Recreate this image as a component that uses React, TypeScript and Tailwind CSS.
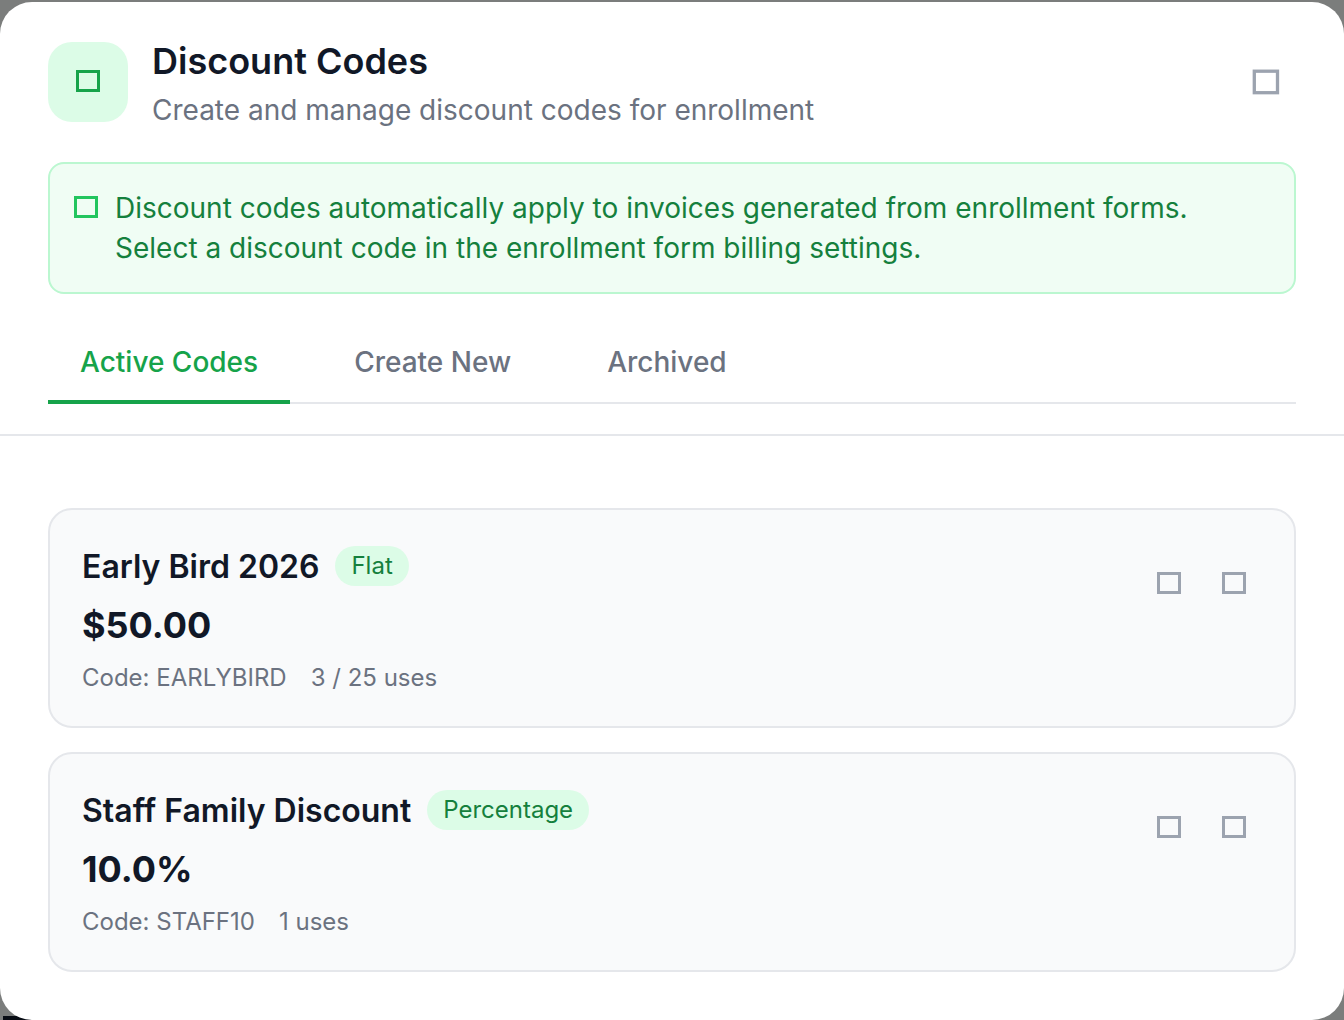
type BoxProps = { className?: string; large?: boolean };

function Box({ className, large }: BoxProps) {
  return large ? (
    <svg width="28" height="26" viewBox="0 0 28 26" fill="none" stroke="currentColor" strokeWidth="3.3" className={className} aria-hidden="true">
      <rect x="2.3" y="2.2" width="23.2" height="21.5" />
    </svg>
  ) : (
    <svg width="24" height="22" viewBox="0 0 24 22" fill="none" stroke="currentColor" strokeWidth="3" className={className} aria-hidden="true">
      <rect x="1.5" y="1.5" width="21" height="19" />
    </svg>
  );
}

type Code = { name: string; kind: string; value: string; code: string; uses: string };

const codes: Code[] = [
  { name: "Early Bird 2026", kind: "Flat", value: "$50.00", code: "EARLYBIRD", uses: "3 / 25 uses" },
  { name: "Staff Family Discount", kind: "Percentage", value: "10.0%", code: "STAFF10", uses: "1 uses" },
];

function CodeCard({ item }: { item: Code }) {
  return (
    <li className="flex items-start justify-between rounded-3xl border-2 border-[#e5e7eb] bg-[#f9fafb] p-8">
      <div>
        <div className="flex items-start gap-4">
          <h3 className="text-[32px] leading-[50px] font-semibold text-[#111827]">{item.name}</h3>
          <span className="mt-1 rounded-full bg-[#dcfce7] px-4 py-1 text-[24px] leading-8 text-[#15803d]">{item.kind}</span>
        </div>
        <p className="mt-1.5 text-[36px] leading-[54px] font-bold text-[#111827]">{item.value}</p>
        <div className="mt-2.5 flex gap-6 text-[24px] leading-8 text-[#6b7280]">
          <span>Code: {item.code}</span>
          <span>{item.uses}</span>
        </div>
      </div>
      <div className="flex gap-2 text-[#9ca3af]">
        <button type="button" aria-label={`Edit ${item.name}`} className="flex h-[82px] w-[57px] items-center justify-center">
          <Box />
        </button>
        <button type="button" aria-label={`Archive ${item.name}`} className="flex h-[82px] w-[57px] items-center justify-center">
          <Box />
        </button>
      </div>
    </li>
  );
}

export default function App() {
  return (
    <div className="relative isolate min-h-screen bg-[#7b7d7c] pt-0.5 font-['Inter',sans-serif]">
      {/* Sliver of the page behind the dialog's rounded corner */}
      <div className="absolute bottom-0 left-[3px] -z-10 h-1 w-7 bg-[#080c14]" aria-hidden="true" />
      <main className="rounded-4xl bg-white">
        <header className="border-b-2 border-[#e5e7eb] px-12 pt-8 pb-[30px]">
          <div className="flex items-center">
            <div className="flex size-20 items-center justify-center rounded-3xl bg-[#dcfce7] pb-0.5">
              <Box className="text-[#16a34a]" />
            </div>
            <div className="ml-6 flex-1">
              <h1 className="mb-0.5 text-[36px] leading-[54px] font-semibold text-[#111827]">Discount Codes</h1>
              <p className="text-[28px] leading-10 text-[#6b7280]">Create and manage discount codes for enrollment</p>
            </div>
            <button type="button" aria-label="Close" className="flex size-[60px] items-center justify-center text-[#9ca3af]">
              <Box large />
            </button>
          </div>

          <div className="mt-8 flex rounded-2xl border-2 border-[#bbf7d0] bg-[#f0fdf4] p-6">
            <Box className="mt-2 mr-[17px] shrink-0 text-[#22c55e]" />
            <p className="max-w-[1120px] text-[28px] leading-10 text-[#15803d]">
              Discount codes automatically apply to invoices generated from enrollment forms. Select a discount code in the enrollment form billing settings.
            </p>
          </div>

          <nav className="mt-8 border-b-2 border-[#e5e7eb]">
            <div className="-mb-0.5 flex gap-8 text-[28px] leading-10 font-medium text-[#6b7280]">
              <button type="button" aria-current="page" className="border-b-4 border-[#16a34a] px-8 pt-4 pb-[18px] text-[#16a34a]">Active Codes</button>
              <button type="button" className="border-b-4 border-transparent px-8 pt-4 pb-[18px]">Create New</button>
              <button type="button" className="border-b-4 border-transparent px-8 pt-4 pb-[18px]">Archived</button>
            </div>
          </nav>
        </header>

        <ul className="flex flex-col gap-6 px-12 pt-[72px] pb-12">
          {codes.map((item) => (
            <CodeCard key={item.code} item={item} />
          ))}
        </ul>
      </main>
    </div>
  );
}
